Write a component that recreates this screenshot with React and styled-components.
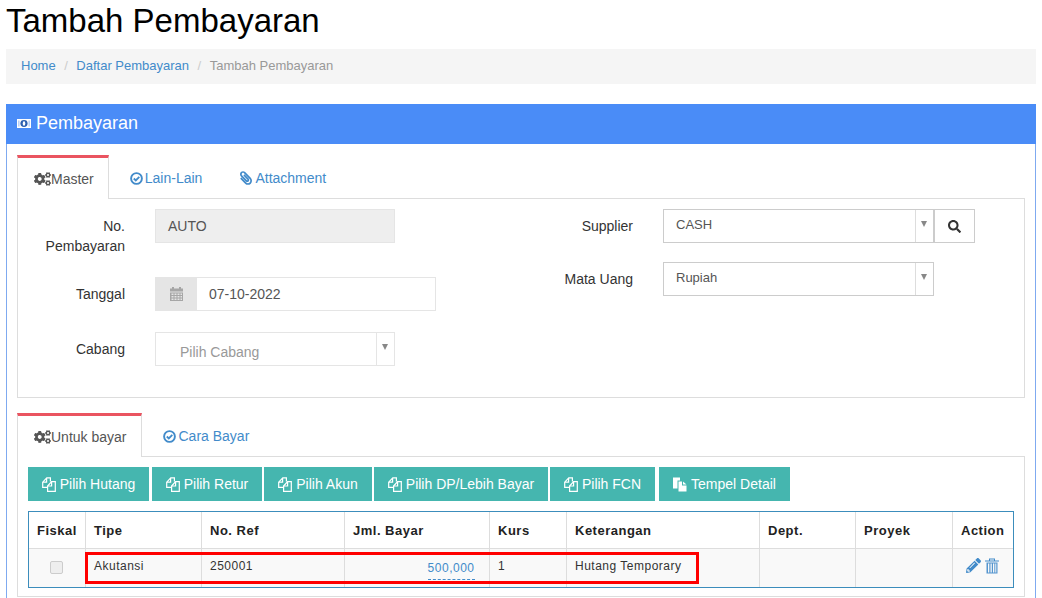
import React from 'react'
import styled, { createGlobalStyle } from 'styled-components'
import { FaCogs, FaPaperclip, FaSearch, FaPencilAlt } from 'react-icons/fa'

const GlobalStyle = createGlobalStyle`
  html, body {
    margin: 0;
    height: 100%;
    overflow: hidden;
    background: #fff;
    font-family: "Liberation Sans", Arial, sans-serif;
    font-size: 14px;
    color: #333;
  }
  * { box-sizing: border-box; }
`

const Page = styled.div`
  padding: 0 6px;
  height: 598px;
  overflow: hidden;
`

const Title = styled.h1`
  margin: 0;
  height: 49px;
  font-size: 33px;
  line-height: 42px;
  font-weight: 400;
  color: #000;
`

const Breadcrumb = styled.div`
  display: flex;
  align-items: center;
  height: 35px;
  padding: 0 15px 3px;
  margin-bottom: 20px;
  background: #f5f5f5;
  font-size: 13px;
  a { color: #428bca; text-decoration: none; }
  span { color: #ccc; padding: 0 8.5px; }
  em { font-style: normal; color: #999; }
`

const Panel = styled.section`
  width: 1030px;
  border: 1px solid #7faaf0;
  border-top: 0;
  height: 520px;
`

const PanelHeader = styled.div`
  display: flex;
  align-items: center;
  gap: 5px;
  height: 40px;
  margin: 0 -1px;
  padding: 0 11px 2px;
  background: #4a8cf7;
  color: #fff;
  font-size: 18px;
`

const PanelBody = styled.div`
  padding: 11px 10px 0;
`

const Tabs = styled.div`
  display: flex;
  height: 43px;
`

const Tab = styled.div`
  display: flex;
  align-items: center;
  gap: ${({ $active }) => ($active ? '0' : '2px')};
  padding: 0 ${({ $right }) => $right}px 0 ${({ $active }) => ($active ? '16px' : '20px')};
  margin-bottom: ${({ $active }) => ($active ? '-1px' : '0')};
  position: relative;
  color: ${({ $active }) => ($active ? '#555' : '#428bca')};
  background: #fff;
  border-top: 3px solid ${({ $active }) => ($active ? '#ea5460' : 'transparent')};
  border-left: 1px solid ${({ $active }) => ($active ? '#ddd' : 'transparent')};
  border-right: 1px solid ${({ $active }) => ($active ? '#ddd' : 'transparent')};
`

const GearIcon = styled(FaCogs)`
  flex: none;
  width: 17px;
  height: 14px;
`

const ClipIcon = styled(FaPaperclip)`
  flex: none;
  width: 12px;
  height: 14px;
  margin: 0 1px 0 -1px;
  transform: scaleX(-1);
`

const TabBox = styled.div`
  border: 1px solid #ddd;
  margin-bottom: 15px;
  width: 1008px;
`

const FormGrid = styled.div`
  display: grid;
  grid-template-columns: 503px 503px;
  padding: 10px 0 31px;
`

const FormColumn = styled.div`
  display: flex;
  flex-direction: column;
`

const FormRow = styled.div`
  display: flex;
  gap: 30px;
  margin-bottom: ${({ $gap }) => $gap}px;
`

const Label = styled.label`
  flex: none;
  width: ${({ $width }) => $width}px;
  padding-top: 7px;
  padding-left: 20px;
  text-align: right;
  line-height: 20px;
  color: #333;
`

const ReadOnlyInput = styled.div`
  width: 240px;
  height: 34px;
  padding: 0 12px;
  line-height: 33px;
  background: #eee;
  border: 1px solid #e5e5e5;
  color: #555;
`

const InputGroup = styled.div`
  display: flex;
  width: 281px;
  height: 34px;
  border: 1px solid #e5e5e5;
  color: #555;
  line-height: 32px;
`

const Addon = styled.div`
  display: flex;
  align-items: center;
  justify-content: center;
  width: 42px;
  margin: -1px 0 -1px -1px;
  background: #e5e5e5;
  color: #999;
`

const DateValue = styled.div`
  padding-left: 12px;
`

const Select = styled.div`
  display: flex;
  width: ${({ $width }) => $width}px;
  height: 34px;
  background: #fff;
  border: 1px solid ${({ $muted }) => ($muted ? '#e5e5e5' : '#ccc')};
`

const SelectValue = styled.div`
  flex: 1;
  padding-left: ${({ $muted }) => ($muted ? '24px' : '12px')};
  padding-top: ${({ $muted }) => ($muted ? '11px' : '7px')};
  font-size: ${({ $muted }) => ($muted ? '14px' : '13px')};
  line-height: ${({ $muted }) => ($muted ? '16px' : '15px')};
  color: ${({ $muted }) => ($muted ? '#999' : '#555')};
`

const SelectArrow = styled.div`
  flex: none;
  width: 18px;
  border-left: 1px solid ${({ $muted }) => ($muted ? '#e5e5e5' : '#ddd')};
  position: relative;
  &::after {
    content: '';
    position: absolute;
    left: 5px;
    top: 11px;
    border-left: 3.5px solid transparent;
    border-right: 3.5px solid transparent;
    border-top: 6px solid #888;
  }
`

const SearchRow = styled.div`
  display: flex;
`

const SearchButton = styled.button`
  width: 41px;
  height: 34px;
  padding: 0;
  background: #fff;
  border: 1px solid #ccc;
  color: #333;
  font-size: 13px;
  display: flex;
  align-items: center;
  justify-content: center;
`

const Toolbar = styled.div`
  display: flex;
  padding: 10px;
`

const TealButton = styled.button`
  display: flex;
  align-items: center;
  justify-content: center;
  gap: 4px;
  width: ${({ $width }) => $width}px;
  margin-right: ${({ $gap }) => $gap}px;
  height: 34px;
  padding: 0;
  background: #45b6af;
  border: 0;
  color: #fff;
  font-family: inherit;
  font-size: 14px;
`

const TableWrap = styled.div`
  position: relative;
  width: 986px;
  margin-left: 10px;
  margin-bottom: 8px;
  border: 1px solid #3c8dbc;
`

const Table = styled.table`
  width: 100%;
  border-collapse: collapse;
  table-layout: fixed;
  th, td { border-left: 1px solid #ddd; }
  th:first-child, td:first-child { border-left: 0; padding-left: 8px; }
  th {
    height: 36px;
    padding: 1px 8.5px 0;
    text-align: left;
    font-size: 13px;
    letter-spacing: 0.5px;
    color: #222;
    border-bottom: 1px solid #ddd;
  }
  td {
    height: 39px;
    padding: 0 8.5px 4px;
    background: #f9f9f9;
    font-size: 12px;
    letter-spacing: 0.5px;
    color: #333;
  }
`

const CenterCell = styled.td`
  text-align: center;
`

const Checkbox = styled.input`
  appearance: none;
  display: inline-block;
  width: 13px;
  height: 13px;
  margin: 7px 0 0;
  background: #eee;
  border: 1px solid #ccc;
  border-radius: 2px;
`

const AmountCell = styled.td`
  && { text-align: right; padding-right: 14px; }
`

const Amount = styled.a`
  display: inline-block;
  margin-top: 9px;
  padding: 0 0 4px;
  color: #428bca;
  border-bottom: 1px dashed #428bca;
`

const ActionCell = styled.td`
  && { color: #428bca; padding-left: 13px; }
`

const ActionIcons = styled.div`
  display: flex;
  align-items: center;
  gap: 4px;
`

// red marker drawn on top of the screenshot row
const Highlight = styled.div`
  position: absolute;
  left: 56px;
  top: 40px;
  width: 614px;
  height: 32px;
  border: 3px solid #f00;
  pointer-events: none;
`

const MoneyIcon = () => (
  <svg width="14" height="9" viewBox="0 0 14 9">
    <rect width="14" height="9" fill="#fff" />
    <ellipse cx="7" cy="4.5" rx="3.6" ry="3.4" fill="#2c5fb0" />
    <ellipse cx="7" cy="4.5" rx="1.3" ry="2.3" fill="#fff" />
    <rect x="1.2" y="1.5" width="1.3" height="6" fill="#a9c6f5" />
    <rect x="11.5" y="1.5" width="1.3" height="6" fill="#a9c6f5" />
  </svg>
)

const CheckIcon = () => (
  <svg width="13" height="13" viewBox="0 0 13 13" fill="none" stroke="currentColor">
    <circle cx="6.5" cy="6.5" r="5.4" strokeWidth="1.9" />
    <path d="M3.8 6.5l2 2 3.5-3.6" strokeWidth="1.8" />
  </svg>
)

const FilesIcon = () => (
  <svg width="14" height="15" viewBox="0 0 14 15" fill="none" stroke="currentColor" strokeWidth="1.2">
    <path d="M5 10.4H.7V5.2L4.8.8h3.6v3.6" />
    <path d="M.9 5.2h3.7V1" />
    <path d="M5.6 9l4-4.4h3.7v9.7H5.6z" />
    <path d="M5.8 9h3.8V4.8" />
  </svg>
)

const PasteIcon = () => (
  <svg width="14" height="15" viewBox="0 0 14 15" fill="currentColor">
    <path d="M0 .5h7v3H4.5v8H0z" />
    <path d="M5.5 4.5H9v4h4.5v6h-8z" />
    <path d="M10 4.5l3.5 3H10z" />
  </svg>
)

const TrashIcon = () => (
  <svg width="14" height="16" viewBox="0 0 14 16" fill="currentColor">
    <path d="M0 2.5h14v1H0zM4 .5h6v2H9V1.5H5v1H4z" />
    <path d="M1.5 4.5h11V15.5h-11zM3 5.5v9h1.3v-9zM5.5 5.5v9h1.3v-9zM8 5.5v9h1.3v-9zM10.3 5.5v9h1v-9z" fillRule="evenodd" opacity="0.9" />
  </svg>
)

const CalendarIcon = () => (
  <svg width="13" height="14" viewBox="0 0 13 14" fill="#a6a6a6">
    <rect x="2" y="0" width="2" height="2" />
    <rect x="9" y="0" width="2" height="2" />
    <rect x="0" y="1.5" width="13" height="3" />
    <path d="M0 5.5h13V14H0zM1.5 6.5v1.5h2V6.5zM4.5 6.5v1.5h2V6.5zM7.5 6.5v1.5h2V6.5zM10.5 6.5v1.5h1.5V6.5zM1.5 9v1.5h2V9zM4.5 9v1.5h2V9zM7.5 9v1.5h2V9zM10.5 9v1.5h1.5V9zM1.5 11.5V13h2v-1.5zM4.5 11.5V13h2v-1.5zM7.5 11.5V13h2v-1.5zM10.5 11.5V13h1.5v-1.5z" fillRule="evenodd" />
  </svg>
)

const columns = [56, 116, 143, 145, 77, 193, 96, 97, 61]
const headers = ['Fiskal', 'Tipe', 'No. Ref', 'Jml. Bayar', 'Kurs', 'Keterangan', 'Dept.', 'Proyek', 'Action']

const buttons = [
  { label: 'Pilih Hutang', width: 121, gap: 3 },
  { label: 'Pilih Retur', width: 110, gap: 2 },
  { label: 'Pilih Akun', width: 108, gap: 2 },
  { label: 'Pilih DP/Lebih Bayar', width: 174, gap: 2 },
  { label: 'Pilih FCN', width: 105, gap: 4 },
]

const App = () => (
  <Page>
    <GlobalStyle />
    <Title>Tambah Pembayaran</Title>
    <Breadcrumb>
      <a href="#home">Home</a>
      <span>/</span>
      <a href="#daftar">Daftar Pembayaran</a>
      <span>/</span>
      <em>Tambah Pembayaran</em>
    </Breadcrumb>
    <Panel>
      <PanelHeader>
        <MoneyIcon />
        Pembayaran
      </PanelHeader>
      <PanelBody>
        <Tabs>
          <Tab $active $right={14}><GearIcon />Master</Tab>
          <Tab $right={17}><CheckIcon />Lain-Lain</Tab>
          <Tab $right={17}><ClipIcon />Attachment</Tab>
        </Tabs>
        <TabBox>
          <FormGrid>
            <FormColumn>
              <FormRow $gap={21}>
                <Label $width={107}>No. Pembayaran</Label>
                <ReadOnlyInput>AUTO</ReadOnlyInput>
              </FormRow>
              <FormRow $gap={21}>
                <Label $width={107}>Tanggal</Label>
                <InputGroup>
                  <Addon><CalendarIcon /></Addon>
                  <DateValue>07-10-2022</DateValue>
                </InputGroup>
              </FormRow>
              <FormRow $gap={0}>
                <Label $width={107}>Cabang</Label>
                <Select $width={240} $muted>
                  <SelectValue $muted>Pilih Cabang</SelectValue>
                  <SelectArrow $muted />
                </Select>
              </FormRow>
            </FormColumn>
            <FormColumn>
              <FormRow $gap={19}>
                <Label $width={112}>Supplier</Label>
                <SearchRow>
                  <Select $width={271}>
                    <SelectValue>CASH</SelectValue>
                    <SelectArrow />
                  </Select>
                  <SearchButton><FaSearch /></SearchButton>
                </SearchRow>
              </FormRow>
              <FormRow $gap={0}>
                <Label $width={112}>Mata Uang</Label>
                <Select $width={271}>
                  <SelectValue>Rupiah</SelectValue>
                  <SelectArrow />
                </Select>
              </FormRow>
            </FormColumn>
          </FormGrid>
        </TabBox>
        <Tabs>
          <Tab $active $right={15}><GearIcon />Untuk bayar</Tab>
          <Tab $right={17}><CheckIcon />Cara Bayar</Tab>
        </Tabs>
        <TabBox>
          <Toolbar>
            {buttons.map(b => (
              <TealButton key={b.label} $width={b.width} $gap={b.gap}>
                <FilesIcon />{b.label}
              </TealButton>
            ))}
            <TealButton $width={131} $gap={0}><PasteIcon />Tempel Detail</TealButton>
          </Toolbar>
          <TableWrap>
            <Table>
              <colgroup>
                {columns.map((w, i) => <col key={i} width={w} />)}
              </colgroup>
              <thead>
                <tr>{headers.map(h => <th key={h}>{h}</th>)}</tr>
              </thead>
              <tbody>
                <tr>
                  <CenterCell><Checkbox type="checkbox" disabled /></CenterCell>
                  <td>Akutansi</td>
                  <td>250001</td>
                  <AmountCell><Amount>500,000</Amount></AmountCell>
                  <td>1</td>
                  <td>Hutang Temporary</td>
                  <td />
                  <td />
                  <ActionCell>
                    <ActionIcons><FaPencilAlt size={15} /><TrashIcon /></ActionIcons>
                  </ActionCell>
                </tr>
              </tbody>
            </Table>
            <Highlight />
          </TableWrap>
        </TabBox>
      </PanelBody>
    </Panel>
  </Page>
)

export default App
